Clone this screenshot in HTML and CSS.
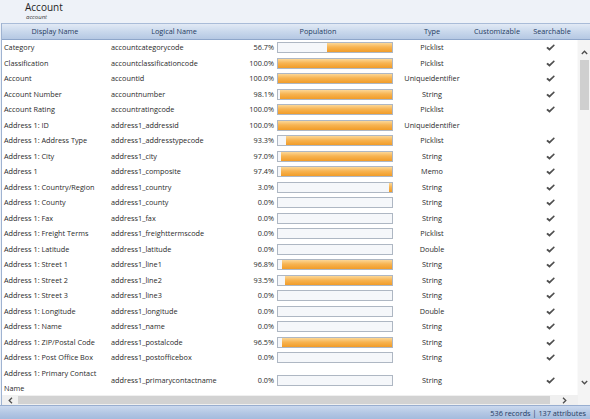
FILE: index.html
```html
<!DOCTYPE html>
<html lang="en">
<head>
    <meta charset="UTF-8">
    <title>Account Attributes</title>
    <link rel="stylesheet" href="styles.css">
</head>
<body>

    <div class="title">
        <div class="entity">Account</div>
        <div class="logical">account</div>
    </div>

    <div class="grid">
        <div class="head">
            <span>Display Name</span>
            <span>Logical Name</span>
            <span>Population</span>
            <span>Type</span>
            <span>Customizable</span>
            <span>Searchable</span>
            <span></span>
        </div>
        <div class="body">
            <div class="rows" id="rows"></div>
            <div class="vscroll">
                <span class="arrow">
                    <svg width="7" height="5" viewBox="0 0 7 5"><path d="M0.8 4 L3.5 1.2 L6.2 4" fill="none" stroke="#4d4d4d" stroke-width="1.3"/></svg>
                </span>
                <span class="thumb"></span>
                <span class="spacer"></span>
                <span class="arrow">
                    <svg width="7" height="5" viewBox="0 0 7 5"><path d="M0.8 1 L3.5 3.8 L6.2 1" fill="none" stroke="#4d4d4d" stroke-width="1.3"/></svg>
                </span>
            </div>
        </div>
        <div class="hscroll">
            <span class="arrow">
                <svg width="5" height="7" viewBox="0 0 5 7"><path d="M4 0.8 L1.2 3.5 L4 6.2" fill="none" stroke="#4d4d4d" stroke-width="1.3"/></svg>
            </span>
            <span class="thumb"></span>
            <span class="arrow">
                <svg width="5" height="7" viewBox="0 0 5 7"><path d="M1 0.8 L3.8 3.5 L1 6.2" fill="none" stroke="#4d4d4d" stroke-width="1.3"/></svg>
            </span>
            <span class="corner"></span>
        </div>
    </div>

    <footer class="status">536 records | 137 attributes</footer>

    <script>
        const attributes = [
            ["Category", "accountcategorycode", 56.7, "Picklist", true],
            ["Classification", "accountclassificationcode", 100.0, "Picklist", true],
            ["Account", "accountid", 100.0, "Uniqueidentifier", true],
            ["Account Number", "accountnumber", 98.1, "String", true],
            ["Account Rating", "accountratingcode", 100.0, "Picklist", true],
            ["Address 1: ID", "address1_addressid", 100.0, "Uniqueidentifier", false],
            ["Address 1: Address Type", "address1_addresstypecode", 93.3, "Picklist", true],
            ["Address 1: City", "address1_city", 97.0, "String", true],
            ["Address 1", "address1_composite", 97.4, "Memo", true],
            ["Address 1: Country/Region", "address1_country", 3.0, "String", true],
            ["Address 1: County", "address1_county", 0.0, "String", true],
            ["Address 1: Fax", "address1_fax", 0.0, "String", true],
            ["Address 1: Freight Terms", "address1_freighttermscode", 0.0, "Picklist", true],
            ["Address 1: Latitude", "address1_latitude", 0.0, "Double", true],
            ["Address 1: Street 1", "address1_line1", 96.8, "String", true],
            ["Address 1: Street 2", "address1_line2", 93.5, "String", true],
            ["Address 1: Street 3", "address1_line3", 0.0, "String", true],
            ["Address 1: Longitude", "address1_longitude", 0.0, "Double", true],
            ["Address 1: Name", "address1_name", 0.0, "String", true],
            ["Address 1: ZIP/Postal Code", "address1_postalcode", 96.5, "String", true],
            ["Address 1: Post Office Box", "address1_postofficebox", 0.0, "String", true],
            ["Address 1: Primary Contact<br>Name", "address1_primarycontactname", 0.0, "String", true]
        ];

        const check = '<svg width="9" height="7" viewBox="0 0 9 7"><path d="M0.3 4 L1.7 2.7 L3.5 4.3 L7.9 0.3 L8.8 1.5 L3.5 6.8 Z" fill="#4f4f4f"/></svg>';

        let html = "";
        attributes.forEach(a => {
            const tall = a[0].includes("<br>") ? " tall" : "";
            html += `
                <div class="row${tall}">
                    <span class="name">${a[0]}</span>
                    <span class="logical-name">${a[1]}</span>
                    <span class="pct">${a[2].toFixed(1)}%</span>
                    <span class="bar-cell"><span class="bar"><span class="fill" style="width: ${a[2]}%"></span></span></span>
                    <span class="type">${a[3]}</span>
                    <span class="custom"></span>
                    <span class="search">${a[4] ? check : ""}</span>
                </div>`;
        });
        // next row is scrolled mostly out of view: only the top of its bar shows
        html += `
            <div class="row">
                <span></span><span></span><span></span>
                <span class="bar-cell"><span class="bar"></span></span>
            </div>`;
        document.getElementById("rows").innerHTML = html;
    </script>

</body>
</html>
```

FILE: styles.css
```css
body {
    margin: 0;
    height: 419px;
    overflow: hidden;
    background: #eef2f8;
    font-family: "Open Sans", "Noto Sans", sans-serif;
    font-size: 7.3px;
    color: #2a2a2a;
}
.title {
    height: 23px;
    padding-left: 25px;
    box-sizing: border-box;
    padding-top: 1px;
}
.entity {
    font-size: 10px;
    line-height: 12px;
    color: #1e1e1e;
}
.logical {
    font-size: 6px;
    line-height: 8px;
    font-style: italic;
    color: #3a3a3a;
    padding-left: 1px;
}
.grid {
    margin-left: 1px;
    border-left: 1px solid #9fb3d1;
}
.head {
    display: grid;
    grid-template-columns: 106px 132px 156px 72px 58px 52px 1fr;
    height: 15px;
    line-height: 15px;
    background: linear-gradient(#e2eaf5, #c9d8ec 50%, #b5c8e3);
    border-top: 1px solid #a9bcd8;
    border-bottom: 1px solid #8ea6ca;
    color: #1f3b62;
    text-align: center;
}
.body {
    display: flex;
    height: 355px;
    background: white;
}
.rows {
    width: 576px;
    overflow: hidden;
}
.row {
    display: grid;
    grid-template-columns: 106px 132px 34px 122px 72px 58px 52px;
    height: 15.5px;
    align-items: center;
    line-height: 11px;
    white-space: nowrap;
}
.row.tall {
    height: 28px;
}
.row.tall .name {
    line-height: 15px;
}
.name {
    padding-left: 2px;
}
.logical-name {
    padding-left: 3px;
}
.pct {
    text-align: right;
}
.bar-cell {
    padding-left: 3px;
    display: flex;
}
.bar {
    width: 116px;
    height: 11px;
    box-sizing: border-box;
    border: 1px solid #aeb7c3;
    background: #f5f7fa;
    display: flex;
    justify-content: flex-end;
}
.fill {
    height: 100%;
    background: linear-gradient(#fcd796, #f7b452 45%, #f19c28);
}
.type {
    text-align: center;
}
.search {
    display: flex;
    justify-content: center;
    padding-right: 3px;
}
.vscroll {
    width: 12px;
    display: flex;
    flex-direction: column;
    align-items: center;
    background: #f4f4f4;
    border-left: 1px solid #fafafa;
}
.vscroll .arrow {
    height: 20px;
    display: flex;
    align-items: center;
    padding-top: 4px;
    box-sizing: border-box;
}
.vscroll .thumb {
    width: 9px;
    height: 50px;
    background: #cfcfcf;
}
.vscroll .spacer {
    flex: 1;
}
.vscroll .arrow:last-child {
    padding-top: 0;
    padding-bottom: 6px;
}
.hscroll {
    display: flex;
    align-items: center;
    height: 10px;
    background: #f0f0f0;
}
.hscroll .arrow {
    width: 16px;
    display: flex;
    justify-content: center;
}
.hscroll .thumb {
    width: 532px;
    height: 8px;
    background: #d2d2d2;
}
.hscroll .thumb + .arrow {
    width: 28px;
}
.hscroll .corner {
    flex: 1;
    height: 100%;
    background: #f4f4f4;
}
.status {
    height: 14px;
    line-height: 14px;
    background: linear-gradient(#cbd9ee, #b3c7e4 50%, #a1b9dc);
    border-top: 1px solid #98aed0;
    color: #1f3b62;
    text-align: right;
    padding-right: 4px;
    font-size: 7.3px;
}
```
